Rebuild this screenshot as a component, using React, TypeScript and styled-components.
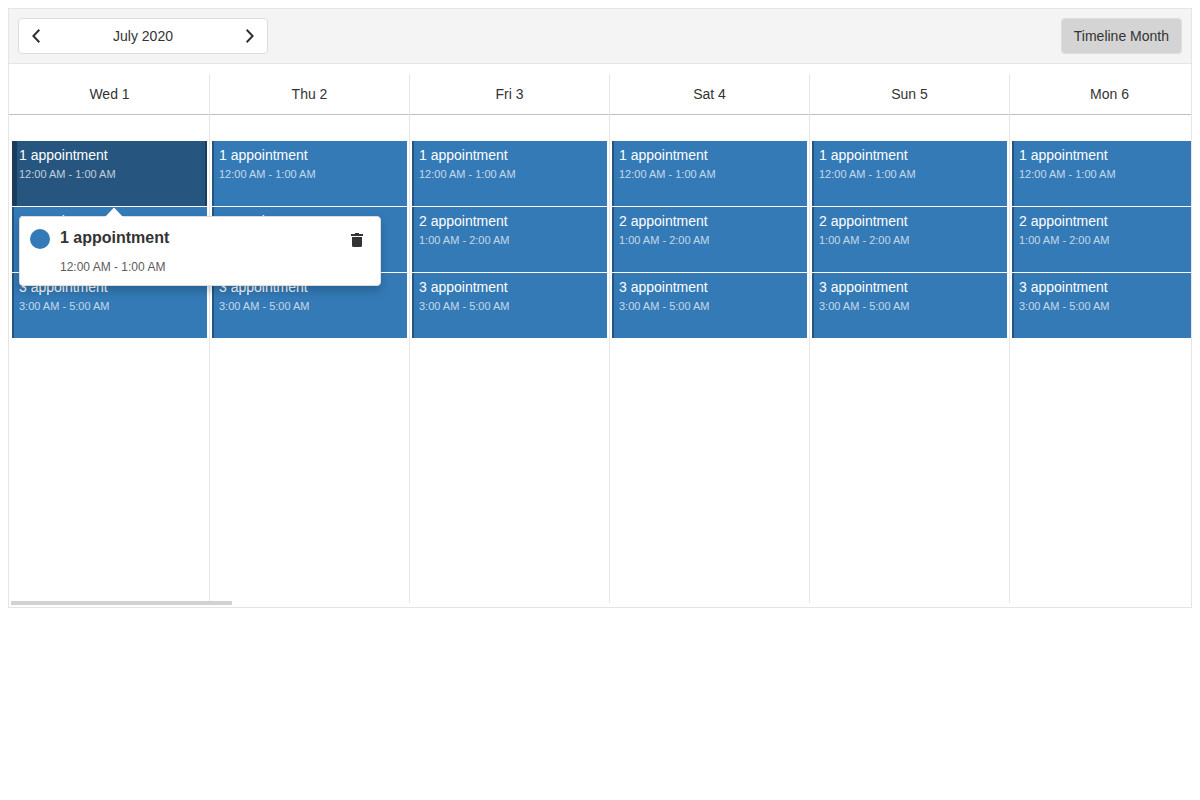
import React from 'react';
import styled, { createGlobalStyle, css } from 'styled-components';

const GlobalStyle = createGlobalStyle`
  *, *::before, *::after { box-sizing: border-box; }
  body {
    margin: 8px;
    background: #fff;
    color: #333;
    font-family: "Liberation Sans", Arial, sans-serif;
    font-size: 14px;
  }
  button { font: inherit; color: inherit; margin: 0; cursor: pointer; }
`;

const Scheduler = styled.main`
  position: relative;
  border: 1px solid #e5e5e5;
`;

const Toolbar = styled.header`
  display: flex;
  justify-content: space-between;
  padding: 9px;
  background: #f4f4f4;
  border-bottom: 1px solid #e5e5e5;
`;

const Navigator = styled.div`
  display: flex;
  width: 250px;
  height: 36px;
  background: #fff;
  border: 1px solid #ddd;
  border-radius: 4px;
`;

const NavButton = styled.button`
  display: flex;
  align-items: center;
  justify-content: center;
  width: 34px;
  padding: 0;
  background: none;
  border: none;
`;

const Caption = styled.button`
  flex: 1;
  padding: 0;
  background: none;
  border: none;
`;

const ViewButton = styled.button`
  height: 36px;
  padding: 0 12px;
  background: #d4d4d4;
  border: 1px solid #ddd;
  border-radius: 4px;
`;

const Viewport = styled.div`
  overflow: hidden;
  padding-top: 10px;
`;

const Grid = styled.table`
  width: 1200px;
  table-layout: fixed;
  border-collapse: separate;
  border-spacing: 0;
`;

const columnLine = css`
  border-left: 1px solid #e5e5e5;
  &:first-child { border-left-color: transparent; }
`;

const HeaderRow = styled.tr`
  background: linear-gradient(#c0c0c0, #c0c0c0) bottom / 100% 1px no-repeat;
`;

const DayHeader = styled.th`
  ${columnLine}
  height: 41px;
  padding: 0 0 1px;
  font-weight: 400;
`;

const DayCell = styled.td`
  ${columnLine}
  height: 488px;
  padding: 26px 2px 0;
  vertical-align: top;
`;

const AppointmentList = styled.div`
  display: flex;
  flex-direction: column;
  gap: 1px;
`;

const Appointment = styled.button<{ $focused: boolean }>`
  display: flex;
  flex-direction: column;
  height: 65px;
  padding: 6px 7px;
  text-align: left;
  color: #fff;
  border: none;
  outline: none;
  background: ${p => (p.$focused ? '#265680' : '#337ab7')};
  box-shadow: ${p =>
    p.$focused
      ? 'inset 5px 0 0 #1b3d5b, inset -2px 0 0 #1b3d5b'
      : 'inset 2px 0 0 #245580'};
`;

const AppointmentTitle = styled.span`
  line-height: 17px;
`;

const AppointmentTime = styled.span`
  margin-top: 4px;
  font-size: 11px;
  line-height: 13px;
  opacity: 0.7;
`;

const ScrollTrack = styled.div`
  height: 4px;
  margin: -2px 2px 2px;
`;

const ScrollThumb = styled.div`
  position: relative;
  width: 221px;
  height: 4px;
  background: rgba(191, 191, 191, 0.7);
`;

const Popover = styled.section`
  position: absolute;
  top: 207px;
  left: 10px;
  display: flex;
  width: 362px;
  height: 70px;
  padding: 0 10px;
  background: #fff;
  border: 1px solid #ddd;
  border-radius: 4px;
  box-shadow: 0 5px 10px rgba(0, 0, 0, 0.2);
`;

const Arrow = styled.svg`
  position: absolute;
  top: -10px;
  left: 85px;
`;

const Marker = styled.span`
  width: 20px;
  height: 20px;
  margin-top: 12px;
  border-radius: 50%;
  background: #337ab7;
`;

const Details = styled.div`
  flex: 1;
  padding: 11px 10px;
`;

const PopoverTitle = styled.h2`
  margin: 0;
  font-size: 16px;
  line-height: 20px;
`;

const PopoverTime = styled.p`
  margin: 12px 0 0;
  font-size: 12px;
  line-height: 14px;
  color: #5c5c5c;
`;

const DeleteButton = styled.button`
  display: flex;
  align-items: center;
  justify-content: center;
  width: 26px;
  height: 26px;
  margin-top: 10px;
  padding: 0;
  background: none;
  border: none;
`;

const days = ['Wed 1', 'Thu 2', 'Fri 3', 'Sat 4', 'Sun 5', 'Mon 6'];

const appointments = [
  { title: '1 appointment', time: '12:00 AM - 1:00 AM' },
  { title: '2 appointment', time: '1:00 AM - 2:00 AM' },
  { title: '3 appointment', time: '3:00 AM - 5:00 AM' },
];

function Chevron({ direction }: { direction: 'left' | 'right' }) {
  return (
    <svg width="18" height="18" viewBox="0 0 18 18" fill="none" stroke="#333" strokeWidth="2" aria-hidden="true">
      <path d={direction === 'left' ? 'M12.300 2.700 6.400 9l5.900 6.300' : 'M5.700 2.700 11.600 9l-5.900 6.300'} />
    </svg>
  );
}

export default function App() {
  return (
    <>
      <GlobalStyle />
      <Scheduler>
        <Toolbar>
          <Navigator>
            <NavButton aria-label="Previous month"><Chevron direction="left" /></NavButton>
            <Caption>July 2020</Caption>
            <NavButton aria-label="Next month"><Chevron direction="right" /></NavButton>
          </Navigator>
          <ViewButton>Timeline Month</ViewButton>
        </Toolbar>

        <Viewport>
          <Grid>
            <thead>
              <HeaderRow>
                {days.map(day => <DayHeader key={day} scope="col">{day}</DayHeader>)}
              </HeaderRow>
            </thead>
            <tbody>
              <tr>
                {days.map((day, dayIndex) => (
                  <DayCell key={day}>
                    <AppointmentList>
                      {appointments.map((item, index) => (
                        <Appointment key={item.title} $focused={dayIndex === 0 && index === 0}>
                          <AppointmentTitle>{item.title}</AppointmentTitle>
                          <AppointmentTime>{item.time}</AppointmentTime>
                        </Appointment>
                      ))}
                    </AppointmentList>
                  </DayCell>
                ))}
              </tr>
            </tbody>
          </Grid>
          <ScrollTrack><ScrollThumb /></ScrollTrack>
        </Viewport>

        <Popover aria-label="Appointment details">
          <Arrow width="18" height="10" viewBox="0 0 18 10" aria-hidden="true">
            <path d="M0 10 9 .5l9 9.500z" fill="#fff" />
          </Arrow>
          <Marker />
          <Details>
            <PopoverTitle>1 appointment</PopoverTitle>
            <PopoverTime>12:00 AM - 1:00 AM</PopoverTime>
          </Details>
          <DeleteButton aria-label="Delete appointment">
            <svg width="12" height="14" viewBox="0 0 12 14" fill="#333" aria-hidden="true">
              <path d="M0 1h4V0h4v1h4v2H0zM1 4h10v8.500a1.500 1.500 0 0 1-1.500 1.500h-7A1.500 1.500 0 0 1 1 12.500z" />
            </svg>
          </DeleteButton>
        </Popover>
      </Scheduler>
    </>
  );
}
